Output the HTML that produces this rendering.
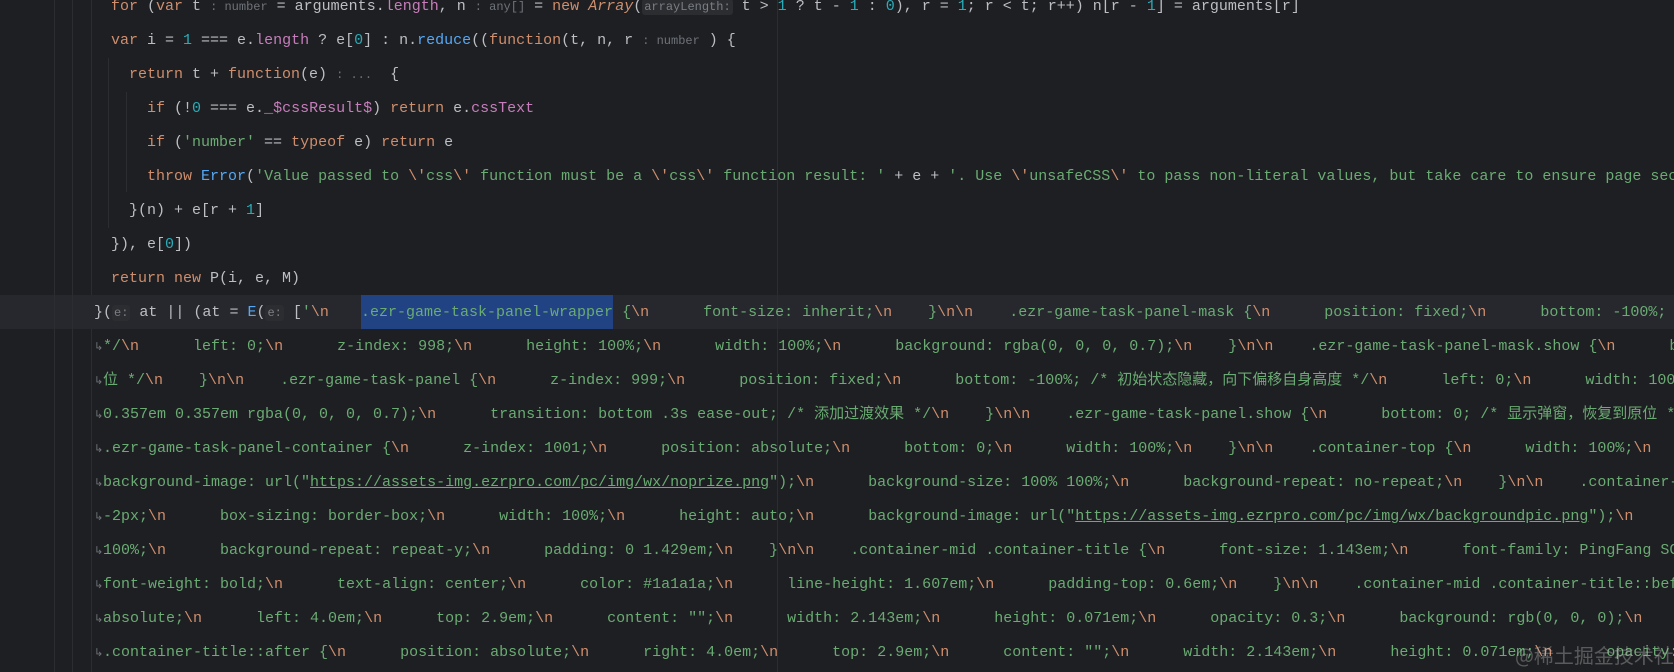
<!DOCTYPE html>
<html><head><meta charset="utf-8"><style>
html,body{margin:0;padding:0;background:#1e1f22;width:1674px;height:672px;overflow:hidden;position:relative}
.r{position:absolute;height:22px;line-height:22px;font-family:"Liberation Mono","Noto Sans CJK SC",monospace;font-size:15px;color:#bcbec4;white-space:pre}
.k{color:#cf8e6d}.n{color:#2aacb8}.s{color:#6aab73}.f{color:#56a8f5}.p{color:#c77dbb}.o{color:#cf8e6d}
.h{font-size:12px;color:#7a7e85;background:#2b2d30;border-radius:3px;padding:1px 2px}
.hn{font-size:12px;color:#6f737a}
.u{text-decoration:underline}
.cur{position:absolute;left:0;top:295px;width:1674px;height:34px;background:#26282e}
.sel{position:absolute;left:361px;top:295px;width:252px;height:34px;background:#214283}
.v{position:absolute;width:1px;background:#2b2d30}
.ar{position:absolute;left:94px;color:#6f737a;font-size:11px;font-family:"DejaVu Sans",sans-serif}
.wm{position:absolute;left:1515px;top:640px;font-family:"Noto Sans CJK SC",sans-serif;font-size:20px;color:rgba(200,200,200,0.35)}
</style></head><body>
<div class="cur"></div><div class="sel"></div>
<div class="v" style="left:54px;top:0;height:672px"></div>
<div class="v" style="left:72px;top:0;height:672px"></div>
<div class="v" style="left:91px;top:0;height:295px"></div>
<div class="v" style="left:91px;top:329px;height:343px"></div>
<div class="v" style="left:108px;top:58px;height:170px"></div>
<div class="v" style="left:126px;top:92px;height:100px"></div>
<div class="v" style="left:777px;top:0;height:672px"></div>

<div class="r" style="left:111px;top:-4px"><span class="k">for</span> (<span class="k">var</span> t <span class="hn">: number</span> = arguments.<span class="p">length</span>, n <span class="hn">: any[]</span> = <span class="k">new</span> <span class="k" style="font-style:italic">Array</span>(<span class="h">arrayLength:</span> t &gt; <span class="n">1</span> ? t - <span class="n">1</span> : <span class="n">0</span>), r = <span class="n">1</span>; r &lt; t; r++) n[r - <span class="n">1</span>] = arguments[r]</div>
<div class="r" style="left:111px;top:30px"><span class="k">var</span> i = <span class="n">1</span> === e.<span class="p">length</span> ? e[<span class="n">0</span>] : n.<span class="f">reduce</span>((<span class="k">function</span>(t, n, r <span class="hn">: number</span> ) {</div>
<div class="r" style="left:129px;top:64px"><span class="k">return</span> t + <span class="k">function</span>(e) <span class="hn">: ...</span>  {</div>
<div class="r" style="left:147px;top:98px"><span class="k">if</span> (!<span class="n">0</span> === e.<span class="p">_$cssResult$</span>) <span class="k">return</span> e.<span class="p">cssText</span></div>
<div class="r" style="left:147px;top:132px"><span class="k">if</span> (<span class="s">'number'</span> == <span class="k">typeof</span> e) <span class="k">return</span> e</div>
<div class="r" style="left:147px;top:166px"><span class="k">throw</span> <span class="f">Error</span>(<span class="s">'Value passed to </span><span class="o">\'</span><span class="s">css</span><span class="o">\'</span><span class="s"> function must be a </span><span class="o">\'</span><span class="s">css</span><span class="o">\'</span><span class="s"> function result: '</span> + e + <span class="s">'. Use </span><span class="o">\'</span><span class="s">unsafeCSS</span><span class="o">\'</span><span class="s"> to pass non-literal values, but take care to ensure page sec</span></div>
<div class="r" style="left:129px;top:200px">}(n) + e[r + <span class="n">1</span>]</div>
<div class="r" style="left:111px;top:234px">}), e[<span class="n">0</span>])</div>
<div class="r" style="left:111px;top:268px"><span class="k">return</span> <span class="k">new</span> P(i, e, M)</div>
<div class="r" style="left:94px;top:302px">}(<span class="h">e:</span> at || (at = <span class="f">E</span>(<span class="h">e:</span> [<span class="s">'</span><span class="o">\n</span></div>
<div class="r" style="left:361px;top:302px"><span class="s">.ezr-game-task-panel-wrapper</span> <span class="s">{</span><span class="o">\n</span><span class="s">      font-size: inherit;</span><span class="o">\n</span><span class="s">    }</span><span class="o">\n\n</span><span class="s">    .ezr-game-task-panel-mask {</span><span class="o">\n</span><span class="s">      position: fixed;</span><span class="o">\n</span><span class="s">      bottom: -100%;</span></div>

<div class="ar" style="top:340px">↳</div><div class="r g" style="left:103px;top:336px">*/\n      left: 0;\n      z-index: 998;\n      height: 100%;\n      width: 100%;\n      background: rgba(0, 0, 0, 0.7);\n    }\n\n    .ezr-game-task-panel-mask.show {\n      b</div>
<div class="ar" style="top:374px">↳</div><div class="r g" style="left:103px;top:370px">位 */\n    }\n\n    .ezr-game-task-panel {\n      z-index: 999;\n      position: fixed;\n      bottom: -100%; /* 初始状态隐藏，向下偏移自身高度 */\n      left: 0;\n      width: 100</div>
<div class="ar" style="top:408px">↳</div><div class="r g" style="left:103px;top:404px">0.357em 0.357em rgba(0, 0, 0, 0.7);\n      transition: bottom .3s ease-out; /* 添加过渡效果 */\n    }\n\n    .ezr-game-task-panel.show {\n      bottom: 0; /* 显示弹窗，恢复到原位 *</div>
<div class="ar" style="top:442px">↳</div><div class="r g" style="left:103px;top:438px">.ezr-game-task-panel-container {\n      z-index: 1001;\n      position: absolute;\n      bottom: 0;\n      width: 100%;\n    }\n\n    .container-top {\n      width: 100%;\n</div>
<div class="ar" style="top:476px">↳</div><div class="r g" style="left:103px;top:472px">background-image: url("<span class="u">https://assets-img.ezrpro.com/pc/img/wx/noprize.png</span>");\n      background-size: 100% 100%;\n      background-repeat: no-repeat;\n    }\n\n    .container-</div>
<div class="ar" style="top:510px">↳</div><div class="r g" style="left:103px;top:506px">-2px;\n      box-sizing: border-box;\n      width: 100%;\n      height: auto;\n      background-image: url("<span class="u">https://assets-img.ezrpro.com/pc/img/wx/backgroundpic.png</span>");\n</div>
<div class="ar" style="top:544px">↳</div><div class="r g" style="left:103px;top:540px">100%;\n      background-repeat: repeat-y;\n      padding: 0 1.429em;\n    }\n\n    .container-mid .container-title {\n      font-size: 1.143em;\n      font-family: PingFang SC</div>
<div class="ar" style="top:578px">↳</div><div class="r g" style="left:103px;top:574px">font-weight: bold;\n      text-align: center;\n      color: #1a1a1a;\n      line-height: 1.607em;\n      padding-top: 0.6em;\n    }\n\n    .container-mid .container-title::bef</div>
<div class="ar" style="top:612px">↳</div><div class="r g" style="left:103px;top:608px">absolute;\n      left: 4.0em;\n      top: 2.9em;\n      content: "";\n      width: 2.143em;\n      height: 0.071em;\n      opacity: 0.3;\n      background: rgb(0, 0, 0);\n</div>
<div class="ar" style="top:646px">↳</div><div class="r g" style="left:103px;top:642px">.container-title::after {\n      position: absolute;\n      right: 4.0em;\n      top: 2.9em;\n      content: "";\n      width: 2.143em;\n      height: 0.071em;\n      opacity:</div>
<div class="wm">@稀土掘金技术社区</div>
<script>
document.querySelectorAll('.g').forEach(function(el){
  el.innerHTML = '<span class="s">' + el.innerHTML.split('\\n').join('</span><span class="o">\\n</span><span class="s">') + '</span>';
});
</script>
</body></html>
